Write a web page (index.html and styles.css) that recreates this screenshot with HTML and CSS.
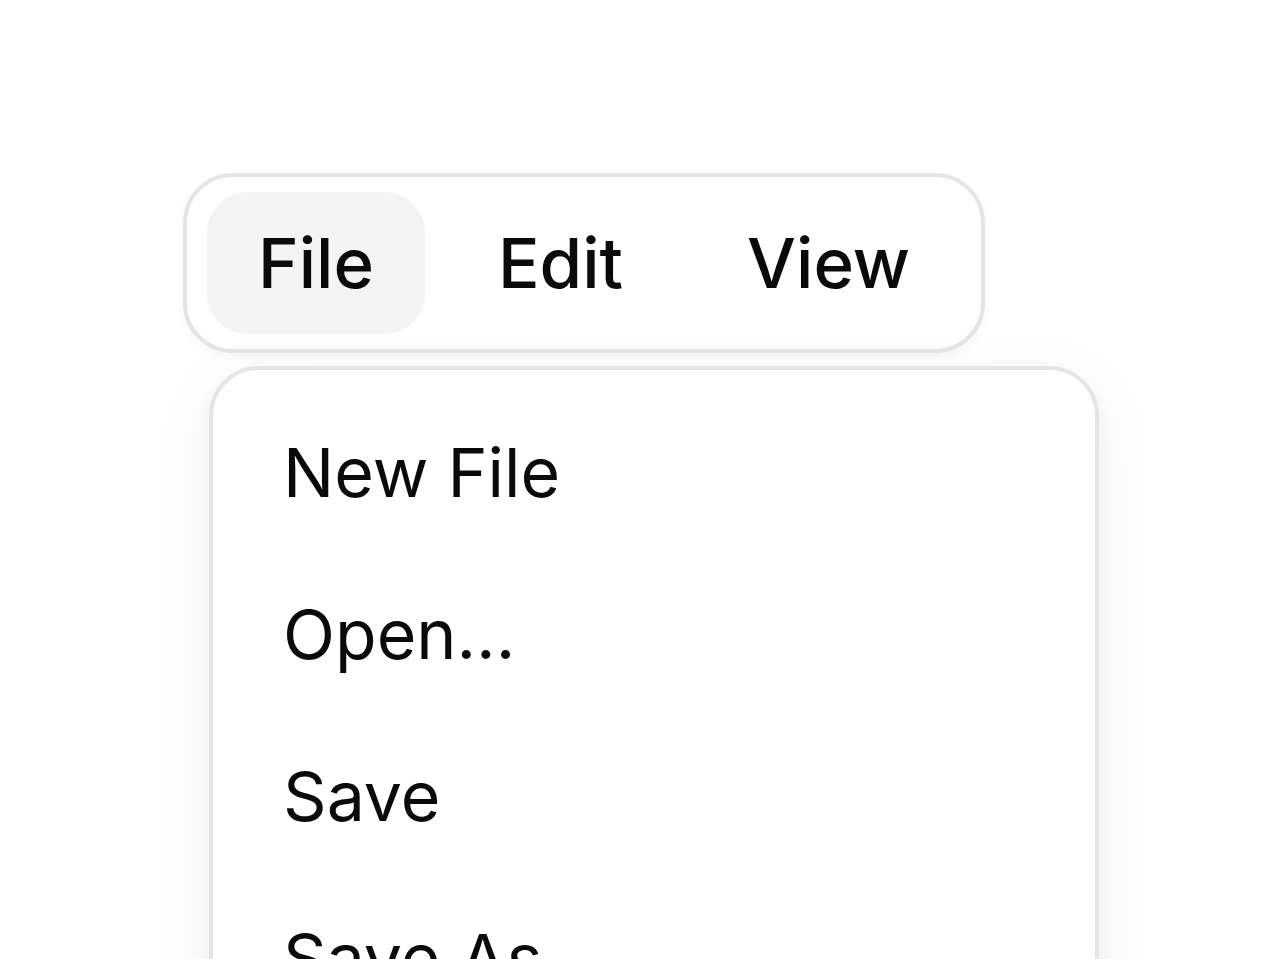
FILE: index.html
```html
<!DOCTYPE html>
<html lang="en">
<head>
<meta charset="utf-8">
<title>Menubar</title>
<link rel="stylesheet" href="styles.css">
</head>
<body>
<div class="stage">
  <div class="menubar-wrap">
    <nav class="menubar">
      <button class="trigger active">File</button>
      <button class="trigger">Edit</button>
      <button class="trigger">View</button>
    </nav>
    <div class="menu">
      <div class="item">New File</div>
      <div class="item">Open...</div>
      <div class="item">Save</div>
      <div class="item">Save As</div>
    </div>
  </div>
</div>
</body>
</html>
```
FILE: styles.css
```css
html, body {
  margin: 0;
  padding: 0;
  background: #ffffff;
  overflow: hidden;
  height: 100%;
}
body {
  font-family: Inter, "Noto Sans", sans-serif;
  color: #0a0a0a;
}
.stage {
  padding: 173px 0 0 183px;
}
.menubar-wrap {
  position: relative;
  display: inline-block;
}
.menubar {
  display: flex;
  align-items: center;
  gap: 22px;
  padding: 15px 20px;
  border: 4px solid #e5e5e5;
  border-radius: 50px;
  background: #ffffff;
  box-shadow: 0 4px 10px rgba(0, 0, 0, 0.04);
}
.trigger {
  font-family: inherit;
  font-size: 69px;
  font-weight: 500;
  line-height: 98px;
  color: #0a0a0a;
  background: transparent;
  border: 0;
  padding: 22px 51px;
  border-radius: 40px;
  margin: 0;
  cursor: default;
}
.trigger.active {
  background: #f4f4f5;
}
.menu {
  position: absolute;
  left: 26px;
  top: 193px;
  width: 890px;
  box-sizing: border-box;
  padding: 21px 20px;
  border: 4px solid #e5e5e5;
  border-radius: 50px;
  background: #ffffff;
  box-shadow: 0 16px 60px rgba(0, 0, 0, 0.07), 0 6px 16px rgba(0, 0, 0, 0.03);
}
.item {
  font-size: 68px;
  font-weight: 400;
  line-height: 98px;
  padding: 32px 50px;
  border-radius: 30px;
}
```
